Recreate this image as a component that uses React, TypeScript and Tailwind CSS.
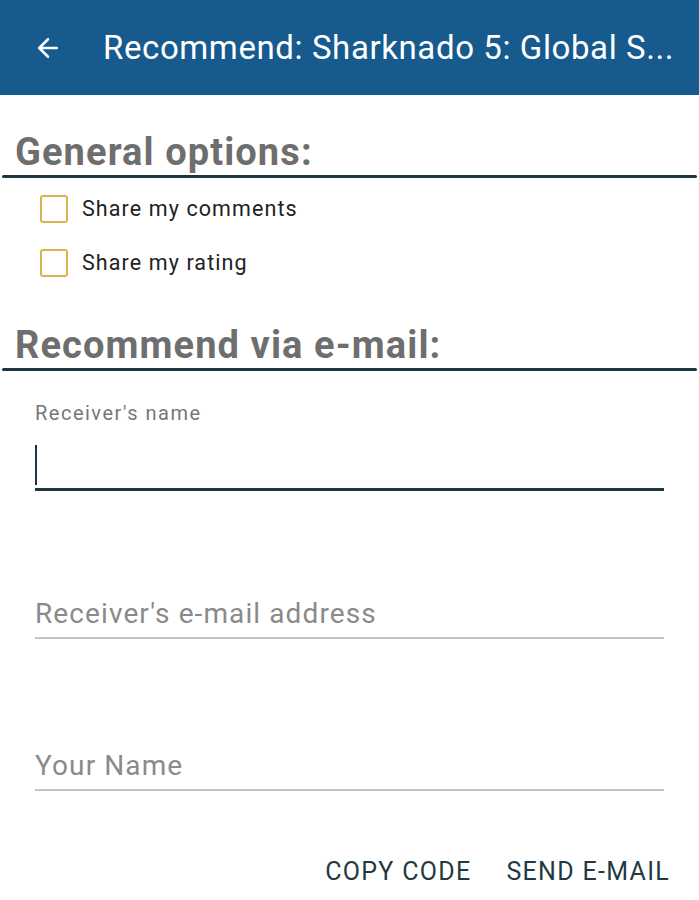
import { ArrowLeft } from "lucide-react";

const font = { fontFamily: "Roboto, 'Noto Sans', sans-serif" };

function Check({ label }: { label: string }) {
  return (
    <label className="flex h-[54px] items-center gap-[14px] pl-[40px]">
      <span className="h-[28px] w-[28px] rounded-[3px] border-2 border-[#d8b54c]" />
      <span className="text-[21.5px] tracking-[1.1px] text-[#222]">{label}</span>
    </label>
  );
}

function Section({ title }: { title: string }) {
  return (
    <div className="px-[2px]">
      <h2 className="pl-[13px] text-[38px] font-bold leading-[46px] tracking-[1.1px] text-[#6e6e6e]">{title}</h2>
      <div className="h-[3px] rounded-full bg-[#1c3640]" />
    </div>
  );
}

function Field({ placeholder }: { placeholder: string }) {
  return (
    <div className="mx-[35px] border-b-2 border-[#c4c4c4] pb-[6px] text-[28px] leading-[34px] tracking-[1.1px] text-[#8a8a8a]">
      {placeholder}
    </div>
  );
}

export default function App() {
  return (
    <div style={font} className="h-[900px] w-[699px] bg-white">
      <div className="flex h-[95px] items-center bg-[#165a8e] text-white">
        <ArrowLeft className="ml-[33px] h-[30px] w-[30px]" strokeWidth={2} />
        <div className="ml-[40px] whitespace-nowrap text-[33px] tracking-[0.6px]">Recommend: Sharknado 5: Global S...</div>
      </div>

      <div className="pt-[34px]">
        <Section title="General options:" />
        <div className="pt-[4px]">
          <Check label="Share my comments" />
          <Check label="Share my rating" />
        </div>
      </div>

      <div className="pt-[32px]">
        <Section title="Recommend via e-mail:" />
      </div>

      <div className="mx-[35px] pt-[30px]">
        <div className="text-[20px] leading-[24px] tracking-[1.5px] text-[#777]">Receiver's name</div>
        <div className="mt-[18px] flex h-[48px] items-start border-b-[3px] border-[#1c3640]">
          <span className="mt-[2px] h-[40px] w-[2px] bg-[#1c3640]" />
        </div>
      </div>

      <div className="pt-[106px]">
        <Field placeholder="Receiver's e-mail address" />
      </div>
      <div className="pt-[110px]">
        <Field placeholder="Your Name" />
      </div>

      <div className="flex justify-end gap-[35px] pr-[29px] pt-[62px] text-[25px] tracking-[1.3px] text-[#1f3a44]">
        <button>COPY CODE</button>
        <button>SEND E-MAIL</button>
      </div>
    </div>
  );
}
